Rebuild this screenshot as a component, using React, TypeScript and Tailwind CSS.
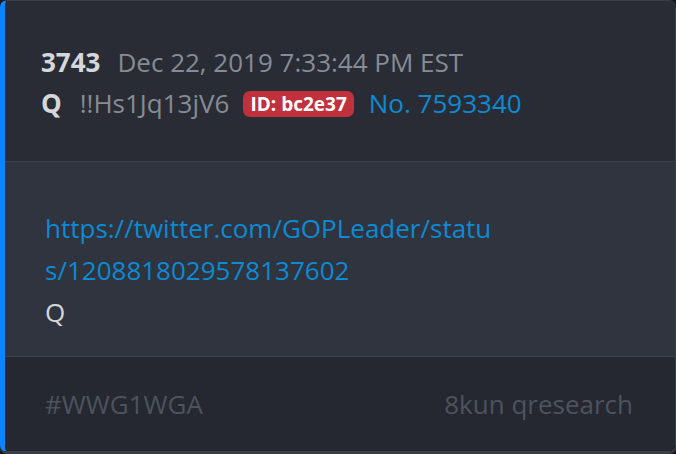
import React from "react";

export default function App() {
  return (
    <div className="w-[676px] h-[454px] bg-[#16181d]" style={{ fontFamily: '"Open Sans", "Noto Sans", sans-serif' }}>
      <div className="w-[676px] h-[452px] flex flex-col overflow-hidden rounded-[7px] border border-[#3a3e47] border-l-[5px] border-l-[#0b84ff] shadow-[0_2px_0_#3a3e47]">
        <div className="h-[161px] shrink-0 bg-[#292c35] border-b border-[#3c414b] pl-[36px] pt-[41px]">
          <div className="flex items-center h-[41px] text-[26px] leading-[41px]">
            <span className="font-bold text-[#d6d7da]">3743</span>
            <span className="ml-[17px] text-[#868b96]">Dec 22, 2019 7:33:44 PM EST</span>
          </div>
          <div className="flex items-center h-[41px] text-[26px] leading-[41px]">
            <span className="font-bold text-[#d6d7da]">Q</span>
            <span className="ml-[18px] text-[#868b96]">!!Hs1Jq13jV6</span>
            <span className="ml-[14px] h-[26px] px-[7px] rounded-[7px] bg-[#c0303d] text-white font-bold text-[19px] leading-[26px]">ID: bc2e37</span>
            <span className="ml-[15px] text-[#0c8ad3]">No. 7593340</span>
          </div>
        </div>
        <div className="h-[195px] shrink-0 bg-[#2f343e] border-b border-[#3c414b] pl-[40px] pt-[45px] text-[26px] leading-[42px]">
          <div className="w-[460px] break-all text-[#0c8ad3]">https://twitter.com/GOPLeader/status/1208818029578137602</div>
          <div className="text-[#d4d5d8]">Q</div>
        </div>
        <div className="flex-1 bg-[#252830] flex items-center justify-between pl-[40px] pr-[42px] text-[26px] text-[#4d535e]">
          <span>#WWG1WGA</span>
          <span>8kun qresearch</span>
        </div>
      </div>
    </div>
  );
}
